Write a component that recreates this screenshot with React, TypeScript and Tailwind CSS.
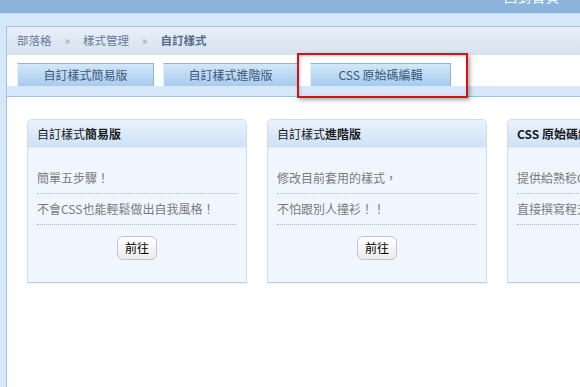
const font = { fontFamily: '"Noto Sans CJK TC", "Liberation Sans", sans-serif' };

const tabs = [
  { label: "自訂樣式簡易版", w: "w-[137px]", gap: "mr-[9px]" },
  { label: "自訂樣式進階版", w: "w-[135px]", gap: "mr-[12px]" },
  { label: "CSS 原始碼編輯", w: "w-[141px]", gap: "" },
];

const cards = [
  {
    plain: "自訂樣式",
    bold: "簡易版",
    lines: ["簡單五步驟！", "不會CSS也能輕鬆做出自我風格！"],
  },
  {
    plain: "自訂樣式",
    bold: "進階版",
    lines: ["修改目前套用的樣式，", "不怕跟別人撞衫！！"],
  },
  {
    plain: "",
    bold: "CSS 原始碼編輯",
    lines: ["提供給熟稔CSS的使用者，", "直接撰寫程式碼打造自己的風格！"],
  },
];

export default function App() {
  return (
    <div className="relative w-[580px] h-[387px] overflow-hidden bg-white" style={font}>
      {/* top bar */}
      <div className="h-[14px] bg-[#8bb4dc] border-b border-[#c8def3] flex justify-end overflow-hidden pr-[20px]">
        <span className="text-white text-[13px] leading-none -mt-[10px] tracking-[1px]">回到首頁</span>
      </div>

      <div className="bg-[#d5e8fa] pl-[6px] pt-[12px] h-[373px]">
        <div className="h-full bg-white border-l border-t border-[#a6c2e2]">
          {/* breadcrumb */}
          <div className="h-[28px] bg-gradient-to-b from-[#e8eff8] to-[#d8e2ef] flex items-center pl-[10px] text-[11.5px] text-[#667d9c] gap-[13px]">
            <span>部落格</span>
            <span className="text-[#8a9ab0]">»</span>
            <span>樣式管理</span>
            <span className="text-[#8a9ab0]">»</span>
            <span className="font-bold text-[#556b8a]">自訂樣式</span>
          </div>

          {/* tabs */}
          <div className="pt-[8px] pl-[10px] flex items-end">
            {tabs.map((t) => (
              <div
                key={t.label}
                className={`${t.w} ${t.gap} h-[23px] flex items-center justify-center text-[12px] text-[#3b5877] border-t border-r border-[#90b6dd] border-l-[#e4f0fb] border-l bg-gradient-to-b from-[#d3e7f9] via-[#bcd9f4] to-[#a7cbee]`}
              >
                {t.label}
              </div>
            ))}
          </div>
          <div className="h-[11px] bg-[#d6e8fa] border-b border-[#a3c1e1]" />

          {/* cards */}
          <div className="flex gap-[20px] pl-[20px] pt-[22px]">
            {cards.map((c, i) => (
              <div
                key={i}
                className="w-[220px] shrink-0 h-[164px] border border-[#cfdeee] border-b-[#c3ced9] rounded-t-[5px] bg-[#eff6fe] shadow-[0_1px_1px_rgba(0,0,0,0.06)]"
              >
                <div className="h-[28px] rounded-t-[5px] bg-gradient-to-b from-[#eaf2fc] to-[#cde2f8] border-b border-[#e3eef9] flex items-center pl-[9px] text-[12px] text-[#1a1a1a] whitespace-nowrap">
                  {c.plain}
                  <span className="font-bold">{c.bold}</span>
                </div>
                <div className="px-[9px] pt-[15px]">
                  {c.lines.map((l) => (
                    <div
                      key={l}
                      className="py-[7px] leading-[16px] text-[12px] text-[#7a7a7a] whitespace-nowrap border-b border-dotted border-[#b5b5b5]"
                    >
                      {l}
                    </div>
                  ))}
                  <div className="flex justify-center mt-[11px]">
                    <button className="h-[24px] px-[7px] rounded-[6px] border border-[#c4c4c4] bg-gradient-to-b from-white to-[#ececec] text-[12px] text-black leading-none">
                      前往
                    </button>
                  </div>
                </div>
              </div>
            ))}
          </div>
        </div>
      </div>

      {/* red annotation box */}
      <div className="absolute left-[297px] top-[53px] w-[171px] h-[45px] border-2 border-[#d0141c] shadow-[2px_2px_4px_rgba(0,0,0,0.35),inset_1px_1px_3px_rgba(0,0,0,0.2)]" />
    </div>
  );
}
